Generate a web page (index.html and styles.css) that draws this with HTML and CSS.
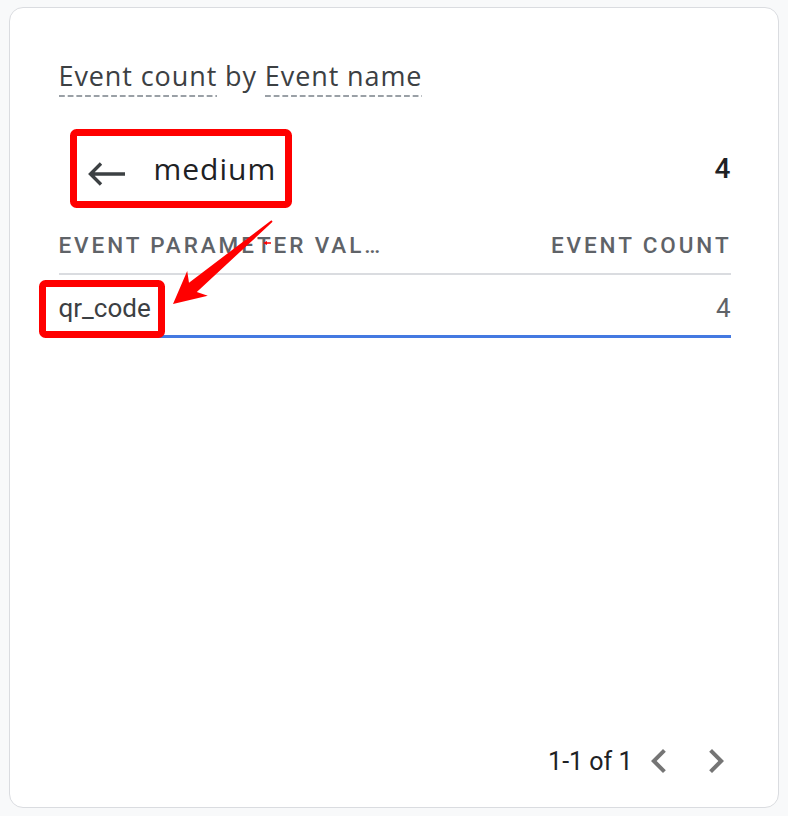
FILE: index.html
```html
<!DOCTYPE html>
<html>
<head>
<meta charset="utf-8">
<link rel="stylesheet" href="styles.css">
</head>
<body>
<div class="card">
  <div class="title">
    <span class="dim">Event count</span> by <span class="dim">Event name</span>
  </div>
  <div class="drill">
    <div class="drill-left">
      <svg class="back" width="40" height="28" viewBox="0 0 40 28">
        <path d="M38 14H4M14 3.5L3.5 14L14 24.5" fill="none" stroke="#3c4043" stroke-width="3.4" stroke-linecap="butt" stroke-linejoin="miter"/>
      </svg>
      <span class="drill-name">medium</span>
    </div>
    <span class="drill-total">4</span>
  </div>
  <div class="thead">
    <span>EVENT PARAMETER VAL…</span>
    <span class="th-right">EVENT COUNT</span>
  </div>
  <div class="trow">
    <span class="cell-name">qr_code</span>
    <span class="cell-val">4</span>
  </div>
  <div class="pager">
    <span class="pager-text">1-1 of 1</span>
    <svg class="chev" width="48" height="48" viewBox="0 0 24 24"><path d="M15.41 7.41L14 6l-6 6 6 6 1.41-1.41L10.83 12z" fill="#757575"/></svg>
    <svg class="chev" width="48" height="48" viewBox="0 0 24 24"><path d="M10 6L8.59 7.41 13.17 12l-4.58 4.59L10 18l6-6z" fill="#757575"/></svg>
  </div>
</div>
<svg class="annot" width="788" height="816" viewBox="0 0 788 816">
  <rect x="73.5" y="132.5" width="215" height="72" rx="3" fill="none" stroke="#ff0000" stroke-width="7"/>
  <rect x="42.5" y="283.5" width="119" height="51" rx="3" fill="none" stroke="#ff0000" stroke-width="7"/>
  <polygon points="272.6,221.8 196.8,291.9 207.8,295.7 173,304 187.2,271.1 189.0,282.7 271.4,220.2" fill="#ff0000"/>
  <polygon points="263,243 267,241 267,242.3 271,242.3 271,243.7 267,243.7 267,245" fill="#ff0000"/>
</svg>
</body>
</html>
```

FILE: styles.css
```css
html, body {
  margin: 0;
  padding: 0;
}
body {
  background: #f8f9fa;
  width: 788px;
  height: 816px;
  overflow: hidden;
  position: relative;
  font-family: Roboto, "Liberation Sans", sans-serif;
}
.card {
  box-sizing: border-box;
  margin: 7px 9px 0 9px;
  height: 801px;
  background: #fff;
  border: 1.5px solid #dadce0;
  border-radius: 14px;
  padding: 53px 47.5px 22px 48.5px;
  display: flex;
  flex-direction: column;
}
.title {
  font-family: "Open Sans", Roboto, sans-serif;
  font-size: 27px;
  line-height: 30px;
  letter-spacing: 0.9px;
  color: #3c4043;
  white-space: nowrap;
}
.dim {
  padding-bottom: 3px;
  background-image: linear-gradient(to right, #9aa0a6 66%, transparent 66%);
  background-size: 8.7px 2px;
  background-repeat: repeat-x;
  background-position: left bottom;
}
.drill {
  margin-top: 54px;
  height: 48px;
  display: flex;
  align-items: center;
  justify-content: space-between;
}
.drill-left {
  display: flex;
  align-items: center;
  padding-left: 28px;
}
.back {
  display: block;
  margin-top: 10px;
}
.drill-name {
  margin-left: 27px;
  font-family: "Open Sans", Roboto, sans-serif;
  font-size: 30px;
  letter-spacing: 1px;
  line-height: 48px;
  color: #202124;
}
.drill-total {
  font-size: 28px;
  font-weight: 500;
  line-height: 48px;
  color: #202124;
}
.thead {
  margin-top: 37px;
  display: flex;
  justify-content: space-between;
  font-size: 22.5px;
  font-weight: 500;
  line-height: 30px;
  letter-spacing: 2.9px;
  color: #5f6368;
  padding-bottom: 13px;
  border-bottom: 2px solid #dadce0;
}
.th-right {
  margin-right: -1px;
}
.trow {
  display: flex;
  justify-content: space-between;
  font-size: 26px;
  line-height: 30px;
  padding: 18px 0 12px 0;
  border-bottom: 3px solid #4479e1;
}
.cell-name {
  color: #3c4043;
}
.cell-val {
  color: #5f6368;
}
.pager {
  margin-top: auto;
  margin-right: -9px;
  display: flex;
  justify-content: flex-end;
  align-items: center;
}
.pager-text {
  font-size: 25px;
  color: #202124;
  margin-right: 2px;
}
.chev {
  display: block;
}
.chev + .chev {
  margin-left: 9px;
}
.annot {
  position: absolute;
  left: 0;
  top: 0;
  pointer-events: none;
}
```
